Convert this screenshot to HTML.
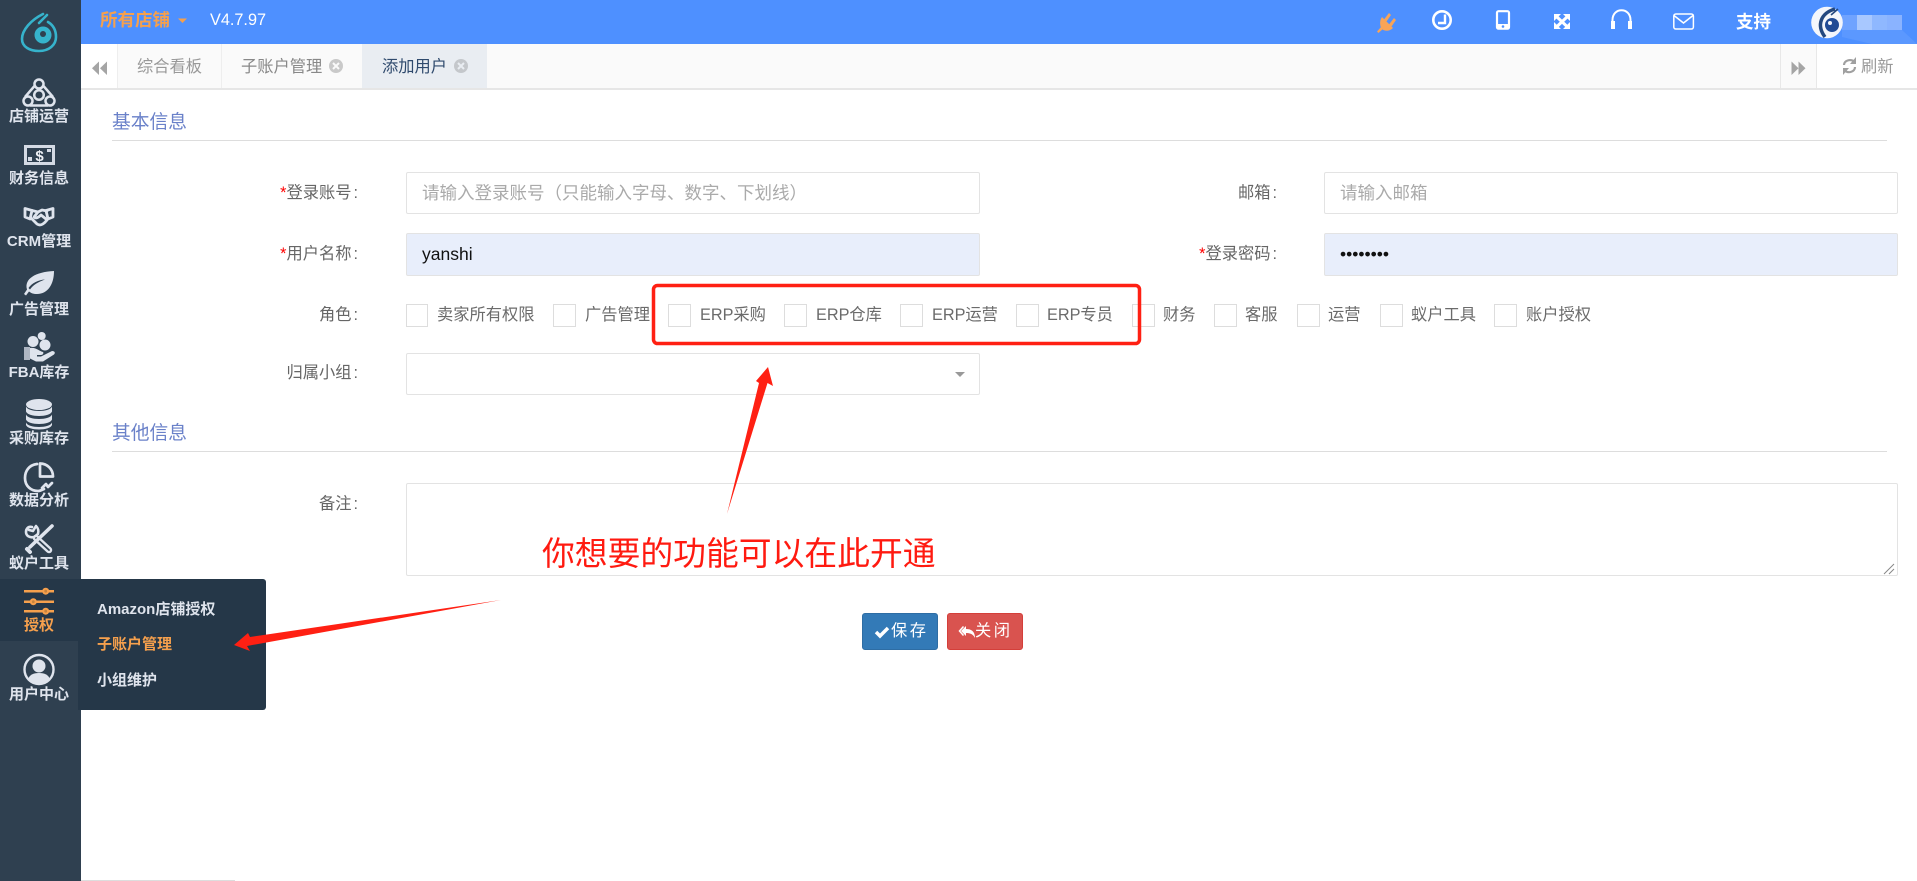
<!DOCTYPE html>
<html lang="zh">
<head>
<meta charset="utf-8">
<title>添加用户</title>
<style>
html,body{margin:0;padding:0;width:1917px;height:881px;overflow:hidden;background:#fff;font-family:"Liberation Sans","Noto Sans CJK SC",sans-serif;}
.a{position:absolute;white-space:nowrap;}
.side{position:absolute;left:0;top:0;width:81px;height:881px;background:#2f4050;}
.top{position:absolute;left:81px;top:0;width:1836px;height:44px;background:#4e90ff;}
.tabs{position:absolute;left:81px;top:44px;width:1836px;height:44px;background:#fafafa;border-bottom:2px solid #e6e6e6;}
.sl{position:absolute;left:0;width:78px;text-align:center;font-size:15px;line-height:20px;font-weight:700;color:#dfe4ed;white-space:nowrap;}
.ln{position:absolute;left:112px;width:1775px;height:1px;background:#ddd;}
.st{position:absolute;left:112px;font-size:18.75px;line-height:26px;color:#6a81c9;}
.lb{position:absolute;text-align:right;font-size:16.25px;line-height:24px;color:#666;white-space:nowrap;}
.lb i{color:#f00;font-style:normal;}
.lb s{text-decoration:none;margin-left:2px;}
.in{position:absolute;box-sizing:border-box;border:1px solid #e3e3e3;border-radius:2px;background:#fff;font-size:17.5px;line-height:40px;padding-left:15px;color:#aaa;white-space:nowrap;}
.in.f{background:#e8eefb;color:#111;}
.cb{position:absolute;top:304px;box-sizing:border-box;width:23px;height:23px;border:1.5px solid #ddd;background:#fff;}
.ct{position:absolute;top:303px;font-size:16.25px;line-height:24px;color:#6b6b6b;white-space:nowrap;}
.btn{position:absolute;top:613px;width:76px;height:37px;box-sizing:border-box;border-radius:3px;color:#fff;font-size:16.25px;line-height:35px;white-space:nowrap;word-spacing:-2px;}
.fm{position:absolute;left:97px;font-size:15px;line-height:20px;font-weight:700;color:#dfe4ed;white-space:nowrap;}
</style>
</head>
<body>
<div class="side"></div>
<div class="a" style="left:0;top:579px;width:81px;height:62px;background:#253748;"></div>
<div class="a" style="left:78px;top:579px;width:188px;height:131px;background:#253748;border-radius:0 3px 3px 0;"></div>

<div class="top"></div>
<div class="a" style="left:1842px;top:15px;width:15px;height:15px;background:#6fa3ff;"></div>
<div class="a" style="left:1857px;top:15px;width:15px;height:15px;background:#a8c8ff;"></div>
<div class="a" style="left:1872px;top:15px;width:15px;height:15px;background:#8fb8ff;"></div>
<div class="a" style="left:1887px;top:15px;width:15px;height:15px;background:#8ab3ff;"></div>
<div class="a" style="left:1842px;top:30px;width:75px;height:14px;background:#5b98ff;clip-path:polygon(0 0,80% 0,100% 100%,40% 100%,0 50%);"></div>

<div class="a" style="left:100px;top:7px;font-size:17.5px;line-height:26px;font-weight:700;color:#f6a04d;">所有店铺</div>
<div class="a" style="left:210px;top:9px;font-size:16.25px;line-height:22px;color:#fff;">V4.7.97</div>
<div class="a" style="left:1736px;top:9px;font-size:17.5px;line-height:26px;font-weight:700;color:#fff;">支持</div>

<div class="tabs"></div>
<div class="a" style="left:81px;top:44px;width:36px;height:44px;background:#fff;"></div>
<div class="a" style="left:117px;top:44px;width:1px;height:44px;background:#eee;"></div>
<div class="a" style="left:221px;top:44px;width:1px;height:44px;background:#eee;"></div>
<div class="a" style="left:362px;top:44px;width:125px;height:44px;background:#e9edf2;"></div>
<div class="a" style="left:1780px;top:44px;width:1px;height:44px;background:#e8e8e8;"></div>
<div class="a" style="left:1816px;top:44px;width:101px;height:44px;background:#fff;border-left:1px solid #e8e8e8;"></div>
<div class="a" style="left:137px;top:55px;font-size:16.25px;line-height:24px;color:#999;">综合看板</div>
<div class="a" style="left:241px;top:55px;font-size:16.25px;line-height:24px;color:#888;">子账户管理</div>
<div class="a" style="left:382px;top:55px;font-size:16.25px;line-height:24px;color:#2f4a6d;">添加用户</div>
<div class="a" style="left:1861px;top:55px;font-size:16.25px;line-height:24px;color:#999;">刷新</div>

<div class="sl" style="top:107px;">店铺运营</div>
<div class="sl" style="top:169px;">财务信息</div>
<div class="sl" style="top:232px;">CRM管理</div>
<div class="sl" style="top:300px;">广告管理</div>
<div class="sl" style="top:363px;">FBA库存</div>
<div class="sl" style="top:429px;">采购库存</div>
<div class="sl" style="top:491px;">数据分析</div>
<div class="sl" style="top:554px;">蚁户工具</div>
<div class="sl" style="top:616px;color:#f6a04d;">授权</div>
<div class="sl" style="top:685px;">用户中心</div>
<div class="fm" style="top:600px;">Amazon店铺授权</div>
<div class="fm" style="top:635px;color:#f6a04d;">子账户管理</div>
<div class="fm" style="top:671px;">小组维护</div>

<div class="st" style="top:109px;">基本信息</div>
<div class="ln" style="top:140px;"></div>
<div class="st" style="top:420px;">其他信息</div>
<div class="ln" style="top:451px;"></div>

<div class="lb" style="right:1559px;top:181px;"><i>*</i>登录账号<s>:</s></div>
<div class="lb" style="right:1559px;top:242px;"><i>*</i>用户名称<s>:</s></div>
<div class="lb" style="right:1559px;top:303px;">角色<s>:</s></div>
<div class="lb" style="right:1559px;top:361px;">归属小组<s>:</s></div>
<div class="lb" style="right:1559px;top:492px;">备注<s>:</s></div>
<div class="lb" style="right:640px;top:181px;">邮箱<s>:</s></div>
<div class="lb" style="right:640px;top:242px;"><i>*</i>登录密码<s>:</s></div>

<div class="in" style="left:406px;top:172px;width:574px;height:42px;">请输入登录账号（只能输入字母、数字、下划线）</div>
<div class="in" style="left:1324px;top:172px;width:574px;height:42px;">请输入邮箱</div>
<div class="in f" style="left:406px;top:233px;width:574px;height:43px;">yanshi</div>
<div class="in f" style="left:1324px;top:233px;width:574px;height:43px;">••••••••</div>
<div class="in" style="left:406px;top:353px;width:574px;height:42px;"></div>
<div class="in" style="left:406px;top:483px;width:1492px;height:93px;"></div>

<div class="cb" style="left:406px;width:22px;"></div><div class="ct" style="left:437px;">卖家所有权限</div>
<div class="cb" style="left:553px;"></div><div class="ct" style="left:585px;">广告管理</div>
<div class="cb" style="left:668px;"></div><div class="ct" style="left:700px;">ERP采购</div>
<div class="cb" style="left:784px;"></div><div class="ct" style="left:816px;">ERP仓库</div>
<div class="cb" style="left:900px;"></div><div class="ct" style="left:932px;">ERP运营</div>
<div class="cb" style="left:1016px;"></div><div class="ct" style="left:1047px;">ERP专员</div>
<div class="cb" style="left:1132px;"></div><div class="ct" style="left:1163px;">财务</div>
<div class="cb" style="left:1214px;"></div><div class="ct" style="left:1245px;">客服</div>
<div class="cb" style="left:1297px;"></div><div class="ct" style="left:1328px;">运营</div>
<div class="cb" style="left:1380px;"></div><div class="ct" style="left:1411px;">蚁户工具</div>
<div class="cb" style="left:1494px;"></div><div class="ct" style="left:1526px;">账户授权</div>

<div class="btn" style="left:862px;background:#337ab7;border:1px solid #2e6da4;padding-left:28px;">保 存</div>
<div class="btn" style="left:947px;background:#d9534f;border:1px solid #d43f3a;padding-left:27px;">关 闭</div>

<div class="a" style="left:542px;top:532px;font-size:32.8px;line-height:44px;color:#ff1a10;">你想要的功能可以在此开通</div>
<div class="a" style="left:81px;top:880px;width:154px;height:1px;background:#ddd;"></div>

<svg class="a" style="left:0;top:0;" width="1917" height="881" viewBox="0 0 1917 881">
  <!-- logo -->
  <g fill="none" stroke="#36b3cc" stroke-width="2.600" stroke-linecap="round">
    <path d="M43 14C31 20 22 30 22 39C22 47 30 51 39 51C49 51 56 45 56 37C56 30 53 25 48 22"/>
    <path d="M47 15L39 23"/>
  </g>
  <circle cx="43" cy="35" r="8.500" fill="#36b3cc"/><circle cx="43" cy="34" r="3" fill="#2f4050"/>
  <!-- top caret -->
  <path d="M178 18.500h9l-4.500 4.500z" fill="#f6a04d"/>
  <!-- 店铺运营 -->
  <g fill="none" stroke="#dfe4ed" stroke-width="2.500">
    <circle cx="39" cy="84" r="4.500"/><circle cx="39" cy="95" r="4.800"/><circle cx="28" cy="101" r="4.500"/><circle cx="50" cy="101" r="4.500"/>
    <path d="M34.500 86L25 97M43.500 86L53 97M30 105.500H48"/>
  </g>
  <!-- 财务 -->
  <rect x="25.500" y="146.500" width="28" height="17" fill="none" stroke="#d4dae4" stroke-width="3"/>
  <path d="M28 157h4v4h-4zM47 149h4v3h-4z" fill="#d4dae4"/>
  <text x="39.500" y="161" text-anchor="middle" font-family="Liberation Sans" font-weight="700" font-size="15" fill="#eef1f6">$</text>
  <!-- handshake -->
  <g fill="none" stroke="#dfe4ed" stroke-width="2.800" stroke-linejoin="round" stroke-linecap="round">
    <path d="M25 208.500L32 210.500L30 219L25 217ZM53 208.500L46 210.500L48 219L53 217Z"/>
    <path d="M32 210.500L38 212L42 210L47 211M31 218L37 224C40 226 43 225 47 220"/>
    <path d="M38 212L34 217C36 219 39 217 41 215L46 219"/>
  </g>
  <!-- leaf -->
  <path d="M54 271C54 284 48 294 37 294C33 294 31 293 29 291.500L26 295.500L24 294L27 289.500C24 279 35 272 54 271ZM30 289.500C33 285 38 282 45 279.500C38 280 32 283 28.500 288Z" fill="#dfe4ed" fill-rule="evenodd"/>
  <!-- FBA -->
  <g fill="#dfe4ed">
    <circle cx="41.700" cy="336" r="4"/><circle cx="33" cy="341.500" r="5.500"/><circle cx="45" cy="345" r="5.500"/>
    <path d="M24 347h6v13h-6z" fill="#aeb6c2"/>
    <path d="M30 348C36 347 39 351 43 352C44 353 43 355 41 355H37V356.500H41L52 351C55 351 55.500 353 54 354.500L43 361.500H36L30 358.500Z"/>
  </g>
  <!-- database -->
  <g fill="#dfe4ed">
    <ellipse cx="39" cy="404.500" rx="13" ry="5.500"/>
    <path d="M26 406.500C28 412.500 50 412.500 52 406.500V411.500C50 417.500 28 417.500 26 411.500Z"/>
    <path d="M26 414.500C28 420.500 50 420.500 52 414.500V419.500C50 425.500 28 425.500 26 419.500Z"/>
    <path d="M26 422.500C28 428.500 50 428.500 52 422.500V425C50 431 28 431 26 425Z"/>
  </g>
  <!-- pie -->
  <g fill="none" stroke="#dfe4ed" stroke-width="2.700" stroke-linecap="round" stroke-linejoin="round">
    <path d="M37 464C29 465 25 471 25 478C25 486 31 491 38 491C40 491 42 490 44 489"/>
    <path d="M40 463.500C47 463.500 53 469 53 476.500H40Z"/>
    <path d="M42 488L46 484L48 487L52 483"/>
  </g>
  <!-- tools -->
  <g fill="none" stroke="#dfe4ed" stroke-linecap="round" stroke-linejoin="round">
    <path d="M36 538L49 550" stroke-width="6.500"/>
    <path d="M36 538L49 550" stroke="#2f4050" stroke-width="1.800"/>
    <path d="M30 547L52 526" stroke-width="3.600"/>
    <path d="M27 549L30 552" stroke-width="4"/>
    <path d="M32 527C28 526 26 529 26 532C26 536 30 538 34 537L38 534C39 530 38 528 36 526L33 531L29 530" stroke-width="2.600"/>
  </g>
  <!-- sliders -->
  <g fill="#f6a04d" stroke="none">
    <path d="M24 590h30v2.500H24zM24 600.500h30v2.500H24zM24 610h30v2.500H24z"/>
    <circle cx="45.700" cy="591.200" r="3.500"/><circle cx="33.300" cy="601.700" r="3.500"/><circle cx="45.700" cy="611.200" r="3.500"/>
  </g>
  <g fill="#c5843f"><circle cx="45.700" cy="591.200" r="1.400"/><circle cx="33.300" cy="601.700" r="1.400"/><circle cx="45.700" cy="611.200" r="1.400"/></g>
  <!-- user -->
  <circle cx="39" cy="669.500" r="14.500" fill="none" stroke="#dfe4ed" stroke-width="2.400"/>
  <circle cx="39" cy="666" r="6.500" fill="#dfe4ed"/>
  <path d="M28 680C29 675 33 673 39 673C45 673 49 675 50 680C47 682 43 683 39 683C35 683 31 682 28 680Z" fill="#dfe4ed"/>
  <!-- tabs icons -->
  <path d="M99 61.500V75L92 68.300ZM107 61.500V75L100 68.300Z" fill="#a5a5a5"/>
  <path d="M1791.500 61.500V75L1798.500 68.300ZM1798.500 61.500V75L1805.500 68.300Z" fill="#a5a5a5"/>
  <g>
    <circle cx="336" cy="66" r="7" fill="#c9c9c9"/><path d="M333 63l6 6m0-6l-6 6" stroke="#fafafa" stroke-width="2"/>
    <circle cx="461" cy="66" r="7" fill="#c4c7cb"/><path d="M458 63l6 6m0-6l-6 6" stroke="#e9edf2" stroke-width="2"/>
  </g>
  <g fill="none" stroke="#a0a0a0" stroke-width="2.200">
    <path d="M1844 65C1844 61 1850 58 1855 62"/><path d="M1855 67C1855 72 1848 74 1844 70"/>
  </g>
  <path d="M1856 57V64H1850ZM1843 75V68H1849Z" fill="#a0a0a0"/>
  <!-- top icons -->
  <g fill="#f9a457" stroke="none">
    <path d="M1382 17L1393 28C1389 32 1384 31 1382 29C1380 27 1379 21 1382 17Z"/>
    <path d="M1384 19.500L1389 13L1391 15L1386.500 21.500ZM1389 24.500L1394 18L1396 20L1391.500 26.500Z"/>
    <path d="M1382 26L1384 28L1378.500 33L1377 31.500Z"/>
  </g>
  <g fill="none" stroke="#fff">
    <circle cx="1442" cy="20" r="8.700" stroke-width="2.600"/>
    <path d="M1445 14.500V23H1438" stroke-width="2.400"/>
    <rect x="1497" y="11.200" width="12" height="17.500" rx="1.500" stroke-width="2.200"/>
    <path d="M1612.500 28V20C1612.500 7 1630.500 7 1630.500 20V28" stroke-width="2"/>
    <rect x="1673.800" y="14" width="19.600" height="15" rx="2" stroke-width="1.500"/>
    <path d="M1674 15.500L1683.500 23L1693 15.500" stroke-width="1.500"/>
    <path d="M1557 17L1567 26.500M1567 17L1557 26.500" stroke-width="3"/>
  </g>
  <path d="M1497 24H1509V29H1497Z" fill="#fff"/><circle cx="1503" cy="26.500" r="1.300" fill="#4e90ff"/>
  <path d="M1611 21h4v8h-4zM1628 21h4v8h-4z" fill="#fff"/>
  <path d="M1554 14H1561L1554 21ZM1570 14V21L1563 14ZM1554 29V22L1561 29ZM1570 29H1563L1570 22Z" fill="#fff"/>
  <!-- avatar -->
  <circle cx="1827" cy="22.500" r="15.800" fill="#f4f6fb"/>
  <path d="M1835 9C1821 13 1816 25 1825 37" fill="none" stroke="#24487f" stroke-width="3.500"/>
  <circle cx="1832" cy="25" r="7" fill="#214b95"/><circle cx="1830" cy="23" r="2" fill="#f4f6fb"/>
  <path d="M1838 9L1831 15" fill="none" stroke="#24487f" stroke-width="1.600"/>
  <!-- select caret, resize handle -->
  <path d="M955 372H965L960 377Z" fill="#999"/>
  <path d="M1884 574L1894 564M1889 574L1894 569" stroke="#888" stroke-width="1"/>
  <!-- button icons -->
  <path d="M876 632L880 636L888 628" fill="none" stroke="#fff" stroke-width="3.500"/>
  <path d="M966 626L961 631L966 636V633C970 633 973 634 975 638C975 632 972 629 966 629Z" fill="#fff"/>
  <path d="M963.500 626.500L959.500 631L963.500 635.500" fill="none" stroke="#fff" stroke-width="1.500"/>
  <!-- annotations -->
  <rect x="653.500" y="285.500" width="486" height="58" rx="4" fill="none" stroke="#ff2013" stroke-width="3.500"/>
  <path d="M727 514L759 383L756 381L768 367L773 386L767.500 383Z" fill="#ff2013"/>
  <path d="M501 600L250 637L248 633L234 645L250 651L247 646Z" fill="#ff2013"/>
</svg>
</body>
</html>
